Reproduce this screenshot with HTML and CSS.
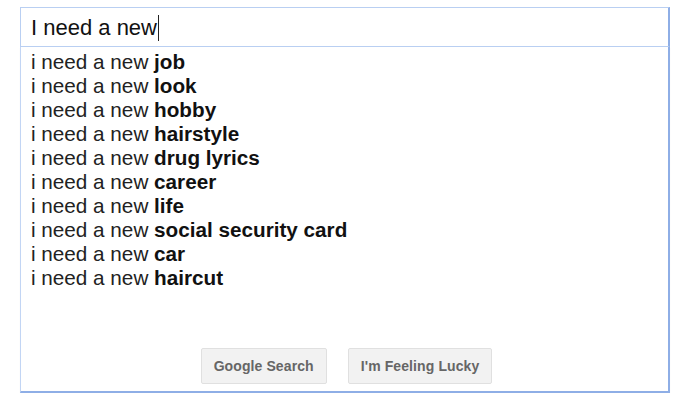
FILE: index.html
```html
<!DOCTYPE html>
<html lang="en">
<head>
    <meta charset="UTF-8">
    <title>I need a new</title>
    <link rel="stylesheet" href="styles.css">
</head>
<body>
    <div class="search">
        <div class="query">I need a new<span class="caret"></span></div>
        <div class="suggest">
            <ul class="list">
                <li>i need a new <b>job</b></li>
                <li>i need a new <b>look</b></li>
                <li>i need a new <b>hobby</b></li>
                <li>i need a new <b>hairstyle</b></li>
                <li>i need a new <b>drug lyrics</b></li>
                <li>i need a new <b>career</b></li>
                <li>i need a new <b>life</b></li>
                <li>i need a new <b>social security card</b></li>
                <li>i need a new <b>car</b></li>
                <li>i need a new <b>haircut</b></li>
            </ul>
            <div class="buttons">
                <button type="button">Google Search</button>
                <button type="button" class="lucky">I'm Feeling Lucky</button>
            </div>
        </div>
    </div>
</body>
</html>
```

FILE: styles.css
```css
body { margin: 0; background: #fff; font-family: "Liberation Sans", Arial, sans-serif; }
.search {
    width: 650px;
    margin: 7px 0 0 20px;
}
.query {
    height: 40px;
    box-sizing: border-box;
    border: 1px solid #b9cff2;
    border-right: 2px solid #8eaee6;
    padding: 2px 0 0 10px;
    font-size: 22px;
    color: #111;
    display: flex;
    align-items: center;
}
.caret {
    display: inline-block;
    width: 1px;
    height: 26px;
    background: #222;
    margin-left: 1px;
}
.suggest {
    border-left: 1px solid #c2d5f4;
    border-right: 2px solid #8eaee6;
    border-bottom: 2px solid #8eaee6;
    box-shadow: 0 1px 1px rgba(0,0,0,0.06);
    padding: 3px 0 7px 0;
}
.list { list-style: none; margin: 0; padding: 0 0 0 10px; }
.list li {
    font-size: 20.7px;
    line-height: 24px;
    height: 24px;
    color: #222;
}
.list b { color: #111; }
.buttons {
    display: flex;
    justify-content: center;
    gap: 21px;
    margin-top: 58px;
    padding-left: 4px;
}
button {
    height: 36px;
    padding: 0 12px;
    background: #f2f2f2;
    border: 1px solid #e0e0e0;
    border-radius: 2px;
    color: #666;
    font-family: "Liberation Sans", Arial, sans-serif;
    font-size: 14px;
    font-weight: bold;
    letter-spacing: 0.1px;
    cursor: pointer;
}
```
